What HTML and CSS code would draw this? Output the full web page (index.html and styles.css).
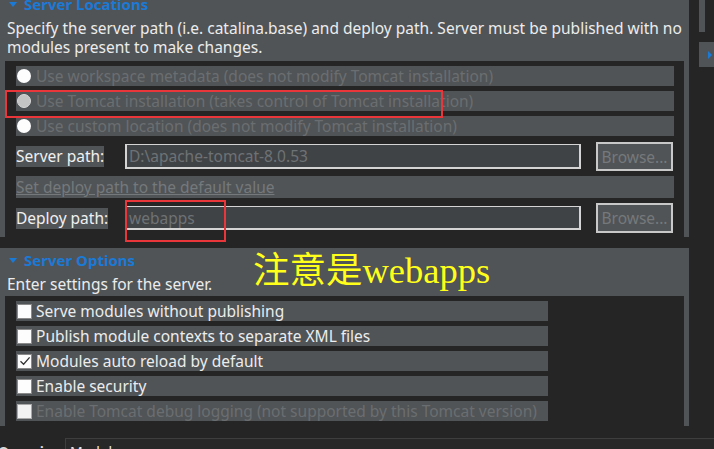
FILE: index.html
```html
<!DOCTYPE html>
<html>
<head>
<meta charset="utf-8">
<link rel="stylesheet" href="styles.css">
</head>
<body>
<div class="page">
  <div class="main">
    <section class="panel loc">
      <div class="sec-head"><span class="tri"></span>Server Locations</div>
      <p class="desc">Specify the server path (i.e. catalina.base) and deploy path. Server must be published with no modules present to make changes.</p>
      <div class="box">
        <div class="row dis"><span class="radio"></span>Use workspace metadata (does not modify Tomcat installation)</div>
        <div class="row dis"><span class="radio sel"></span>Use Tomcat installation (takes control of Tomcat installation)</div>
        <div class="row dis"><span class="radio"></span>Use custom location (does not modify Tomcat installation)</div>
        <div class="field">
          <span class="lbl">Server path:</span>
          <span class="input">D:\apache-tomcat-8.0.53</span>
          <span class="btn">Browse...</span>
        </div>
        <div class="row link"><span>Set deploy path to the default value</span></div>
        <div class="field deploy">
          <span class="lbl">Deploy path:</span>
          <span class="input">webapps</span>
          <span class="btn">Browse...</span>
        </div>
      </div>
    </section>
    <section class="panel opt">
      <div class="sec-head"><span class="tri"></span>Server Options</div>
      <p class="desc">Enter settings for the server.</p>
      <div class="box">
        <div class="row crow"><span class="chk"></span>Serve modules without publishing</div>
        <div class="row crow"><span class="chk"></span>Publish module contexts to separate XML files</div>
        <div class="row crow"><span class="chk on"><svg viewBox="0 0 14 14" width="14" height="14"><path d="M2.5 7.2 L5.6 10.2 L11.6 3.4" fill="none" stroke="#333" stroke-width="1.3"/></svg></span>Modules auto reload by default</div>
        <div class="row crow"><span class="chk"></span>Enable security</div>
        <div class="row crow dis"><span class="chk off"></span>Enable Tomcat debug logging (not supported by this Tomcat version)</div>
      </div>
    </section>
    <div class="tabs">
      <span class="tab">Overview</span>
      <div class="tabbox">Modules</div>
    </div>
  </div>
  <div class="side">
    <div class="strip"></div>
    <div class="sidebtn"><span class="rtri"></span></div>
  </div>
  <div class="mark m1"></div>
  <div class="mark m2"></div>
  <div class="note">注意是<span class="lat">webapps</span></div>
</div>
</body>
</html>
```

FILE: styles.css
```css
html, body {
  margin: 0;
  padding: 0;
  background: #252525;
}
body {
  width: 714px;
  height: 449px;
  overflow: hidden;
  font-family: "Noto Sans", "Open Sans", sans-serif;
  font-size: 15.5px;
  color: #e6e6e6;
}
.page {
  position: relative;
  display: flex;
  width: 714px;
  height: 449px;
  overflow: hidden;
}
.main {
  width: 689px;
  display: flex;
  flex-direction: column;
}
.panel {
  background: #505457;
  padding: 0 5px;
  overflow: hidden;
  flex: none;
}
.loc {
  margin-top: -8px;
  height: 245px;
}
.opt {
  margin-top: 11px;
  height: 178px;
}
.sec-head {
  height: 20px;
  line-height: 20px;
  padding-top: 2px;
  padding-left: 2px;
  font-weight: bold;
  color: #1b7ad6;
  font-size: 15px;
  display: flex;
  align-items: center;
}
.tri {
  width: 0;
  height: 0;
  border-left: 4px solid transparent;
  border-right: 4px solid transparent;
  border-top: 5px solid #1b7ad6;
  margin: 0 7px 0 2px;
}
.desc {
  margin: 5px 0 0;
  padding-left: 2px;
  line-height: 19px;
  font-size: 15.5px;
  color: #ececec;
  white-space: nowrap;
}
.loc .desc {
  white-space: normal;
  width: 676px;
}
.box {
  background: #252525;
  margin-top: 2px;
  padding: 5px 10px 5px 11px;
  display: flex;
  flex-direction: column;
  gap: 5px;
}
.loc .box {
  margin-top: 4px;
}
.row {
  height: 20px;
  background: #505457;
  display: flex;
  align-items: center;
  white-space: nowrap;
  font-size: 15.5px;
}
.dis {
  color: #6b6e70;
}
.radio {
  width: 14px;
  height: 14px;
  border-radius: 50%;
  background: #fdfdfd;
  margin: 0 5px 0 1px;
  box-sizing: border-box;
  flex: none;
}
.radio.sel {
  background: #c4c4c4;
  border: 1px solid #d8d8d8;
}
.crow {
  width: 532px;
  color: #ececec;
}
.crow.dis {
  color: #6b6e70;
}
.chk {
  width: 15px;
  height: 15px;
  background: #fdfdfd;
  border: 1px solid #8a8a8a;
  box-sizing: border-box;
  margin: 0 4px 0 1px;
  flex: none;
  display: flex;
}
.chk svg {
  display: block;
  margin: -0.5px;
}
.chk.off {
  background: #f2f2f2;
  border-color: #a8a8a8;
}
.field {
  display: grid;
  grid-template-columns: 109px 456px 92px;
  align-items: center;
  height: 29px;
  margin-top: 1px;
}
.field.deploy {
  height: 30px;
  margin-top: 0;
}
.lbl {
  justify-self: start;
  background: #505457;
  line-height: 21px;
  font-size: 15.5px;
  color: #f0f0f0;
}
.input {
  height: 25px;
  box-sizing: border-box;
  border: 2px solid #d4d4d4;
  border-top-width: 1px;
  background: #404346;
  color: #6e7274;
  line-height: 22px;
  padding-left: 2px;
  font-size: 15.5px;
  overflow: hidden;
}
.field.deploy .input {
  height: 24px;
}
.btn {
  justify-self: end;
  width: 77px;
  height: 29px;
  box-sizing: border-box;
  border: 2px solid #c8c8c8;
  background: #505457;
  color: #76797b;
  font-size: 15.5px;
  display: flex;
  align-items: center;
  justify-content: center;
}
.field.deploy .btn {
  height: 30px;
}
.link {
  height: 22px;
  color: #75797b;
  text-decoration: underline;
}
.tabs {
  margin-top: 12px;
  display: flex;
  flex: 1;
  width: 714px;
}
.tab {
  width: 67px;
  flex: none;
  font-size: 14px;
  font-weight: bold;
  color: #d8d8d8;
  padding-top: 4px;
  margin-left: -2px;
}
.tabbox {
  flex: 1;
  border-top: 1px solid #3e3e3e;
  border-left: 1px solid #3e3e3e;
  background: #282828;
  padding: 3px 0 0 4px;
  font-size: 14px;
  color: #e8e8e8;
}
.side {
  margin-left: 10px;
  width: 15px;
  display: flex;
  flex-direction: column;
  gap: 10px;
}
.strip {
  width: 6px;
  height: 32px;
  background: #505457;
}
.sidebtn {
  height: 25px;
  background: #505457;
  display: flex;
  align-items: center;
  padding-left: 9px;
}
.rtri {
  width: 0;
  height: 0;
  border-top: 4px solid transparent;
  border-bottom: 4px solid transparent;
  border-left: 4px solid #1b7ad6;
}
.mark {
  position: absolute;
  border: 2px solid #e8363a;
  box-sizing: border-box;
}
.m1 {
  left: 5px;
  top: 90px;
  width: 438px;
  height: 28px;
}
.m2 {
  left: 125px;
  top: 200px;
  width: 101px;
  height: 42px;
}
.note {
  position: absolute;
  left: 253px;
  top: 249px;
  font-family: "Liberation Serif", "Noto Sans CJK SC", serif;
  font-size: 36.5px;
  line-height: 44px;
  color: #ffff1a;
  white-space: nowrap;
}
.note .lat {
  font-family: "Liberation Serif", serif;
}
```
